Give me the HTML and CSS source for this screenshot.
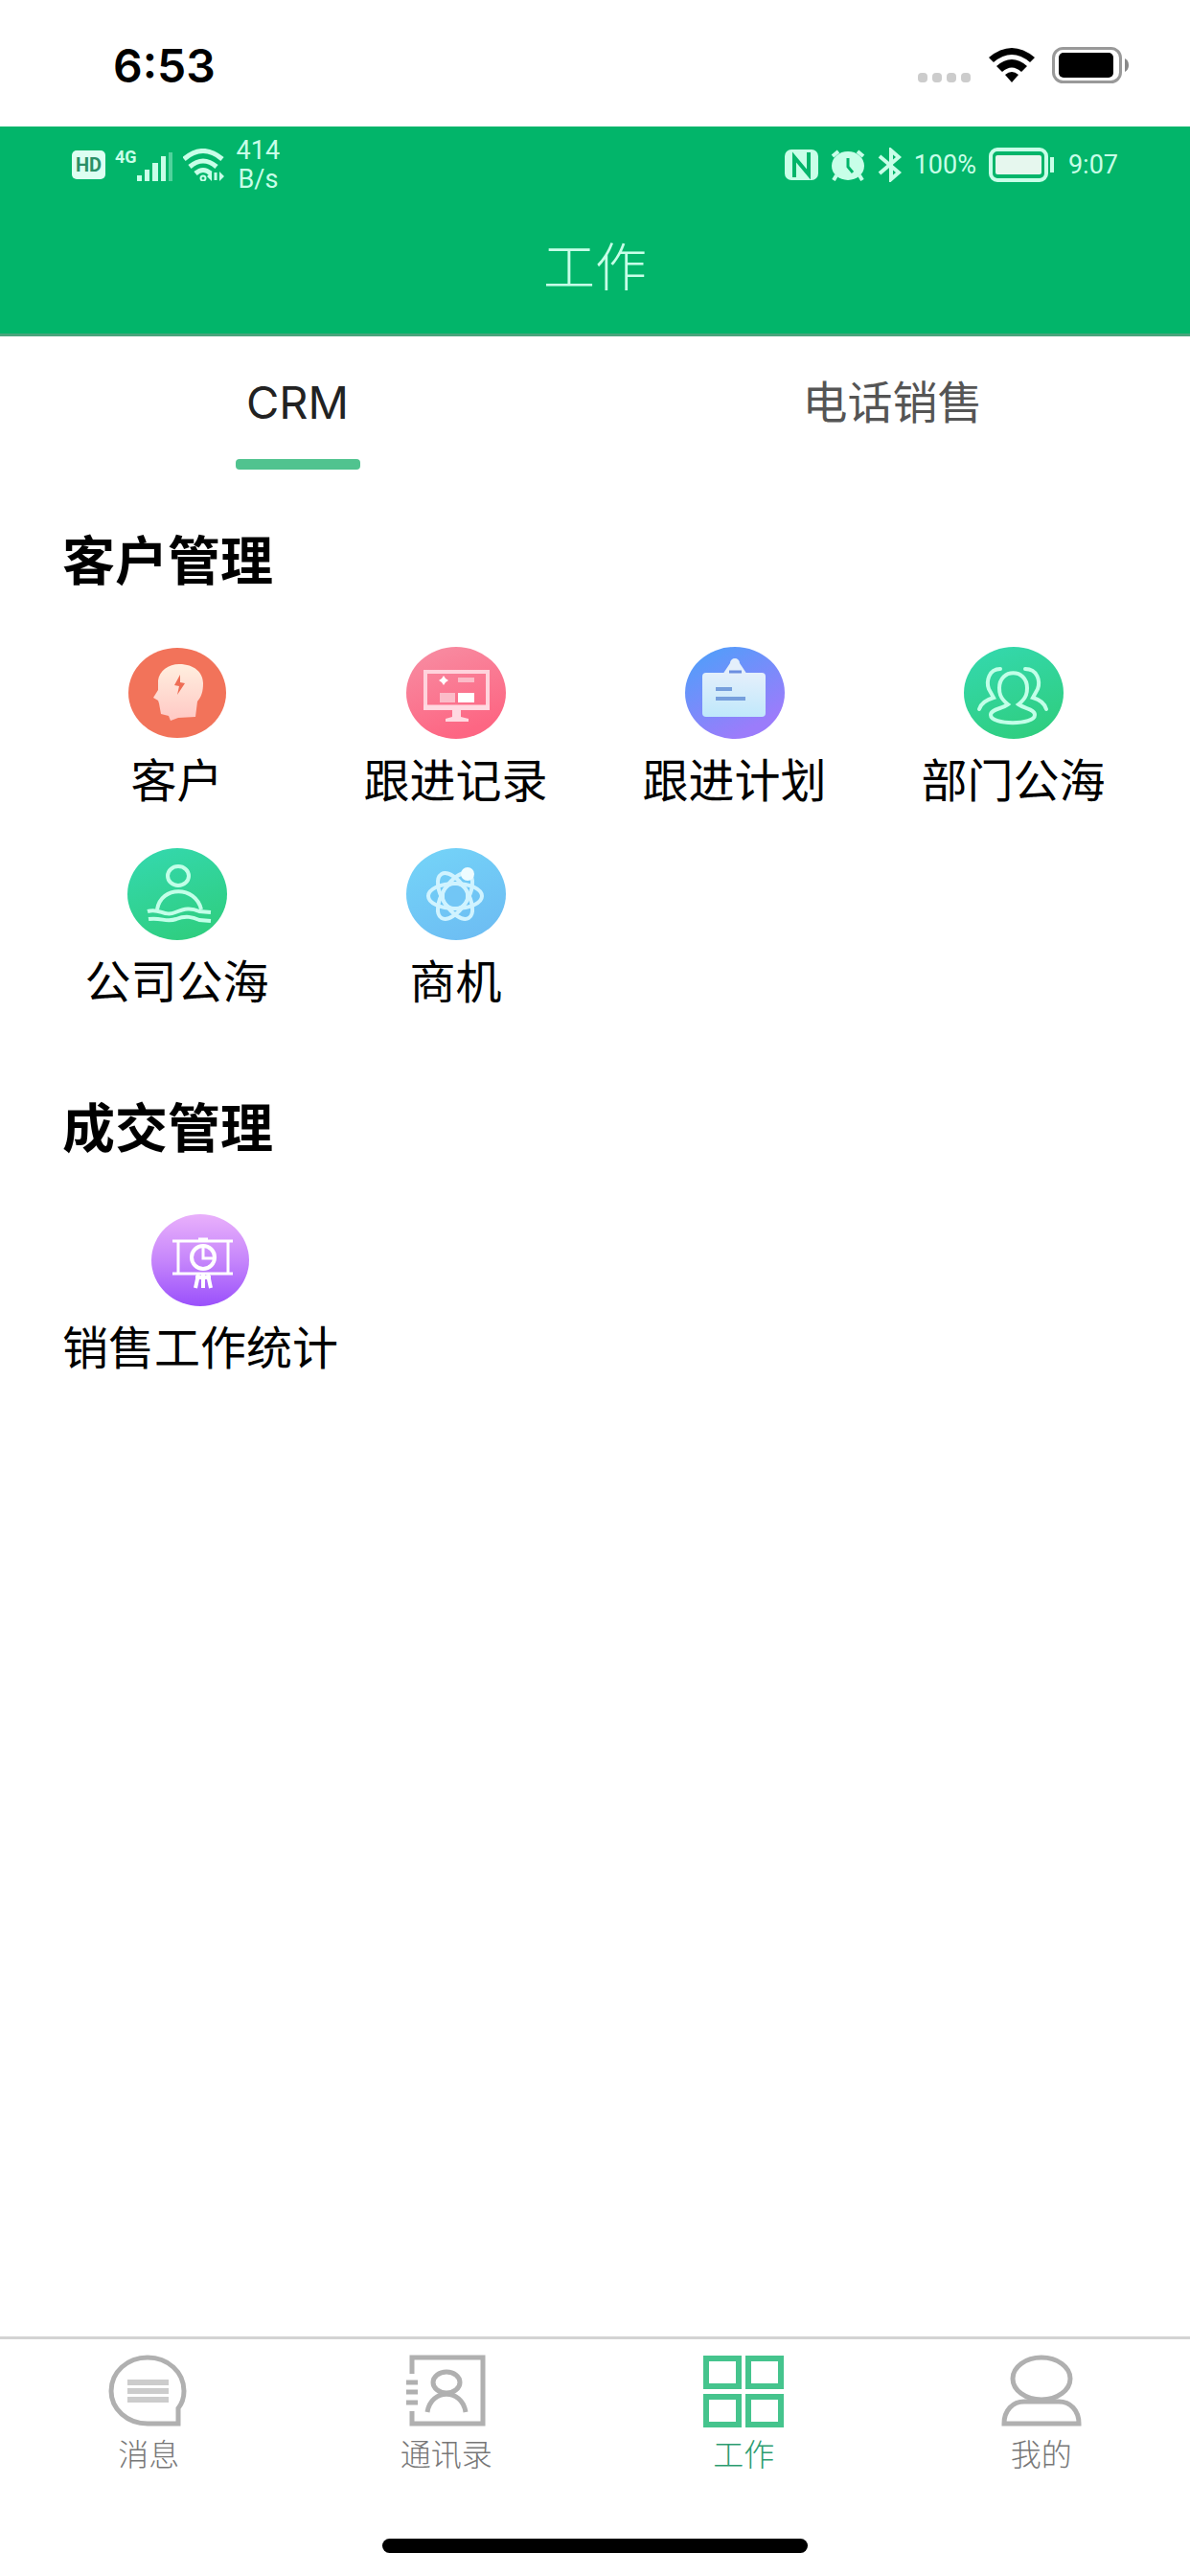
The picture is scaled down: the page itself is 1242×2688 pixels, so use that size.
FILE: index.html
```
<!DOCTYPE html>
<html lang="zh-CN">
<head>
  <meta charset="UTF-8">
  <meta name="viewport" content="width=device-width, initial-scale=1.0">
  <title>工作</title>
  <link rel="stylesheet" href="styles.css">
</head>
<body>
  <div class="phone-bar">
    <span class="phone-time">6:53</span>
    <div class="phone-icons">
      <svg class="dots" width="56" height="36" viewBox="0 0 56 36" fill="#ccc">
        <rect x="0" y="26" width="10" height="10" rx="4"/>
        <rect x="15" y="26" width="10" height="10" rx="4"/>
        <rect x="30" y="26" width="10" height="10" rx="4"/>
        <rect x="45" y="26" width="10" height="10" rx="4"/>
      </svg>
      <svg class="wifi" width="48" height="36" viewBox="0 0 48 36">
        <path d="M0 10 Q24 -10 48 10 L43 15 Q24 -1 5 15 Z"/>
        <path d="M8 19 Q24 5 40 19 L34 25 Q24 16 14 25 Z"/>
        <path d="M17 28 Q24 22 31 28 L24 36 Z"/>
      </svg>
      <svg width="80" height="38" viewBox="0 0 80 38">
        <rect x="1.5" y="1.5" width="70" height="35" rx="10" fill="none" stroke="#999" stroke-width="3"/>
        <rect x="7" y="6" width="57" height="26" rx="5"/>
        <path d="M76 12 Q80 14 80 19 T76 26 Z" fill="#888"/>
      </svg>
    </div>
  </div>

  <header class="header">
    <div class="status">
      <div class="status-left">
        <span class="hd">HD</span>
        <div class="signal">
          <span class="net">4G</span>
          <svg width="38" height="30" viewBox="0 0 38 30" fill="currentColor">
            <rect x="0" y="24" width="5" height="6"/>
            <rect x="8" y="18" width="5" height="12"/>
            <rect x="16" y="11" width="6" height="19"/>
            <rect x="25" y="4" width="5" height="26"/>
            <rect x="33" y="0" width="4" height="30" opacity=".4"/>
          </svg>
        </div>
        <svg class="wifi-small" width="44" height="34" viewBox="0 0 44 34" fill="none" stroke="currentColor" stroke-width="5">
          <path d="M1 11 Q21 -6 41 11"/>
          <path d="M7 19 Q21 7 35 19"/>
          <path d="M13 26 Q21 19 29 26"/>
          <circle cx="21" cy="31" r="1"/>
          <path d="M30 24v10l-5-5zM38 24v10l5-5z" fill="currentColor" stroke="none"/>
          <path d="M34 25v8" stroke-width="3"/>
        </svg>
        <div class="speed"><span>414</span><span>B/s</span></div>
      </div>
      <div class="status-right">
        <svg width="35" height="32" viewBox="0 0 35 32">
          <rect width="35" height="32" rx="7" fill="currentColor"/>
          <path d="M10 29 V8 L25 26 V3" fill="none" stroke="#02b56a" stroke-width="4"/>
        </svg>
        <svg width="36" height="33" viewBox="0 0 36 33">
          <ellipse cx="18" cy="17" rx="17" ry="15" fill="currentColor"/>
          <path d="M2 7 L8 2 M34 7 L28 2 M6 27 L3 32 M30 27 L33 32" stroke="currentColor" stroke-width="4"/>
          <path d="M18 9 V18 L23 24" fill="none" stroke="#02b56a" stroke-width="3"/>
        </svg>
        <svg width="25" height="36" viewBox="0 0 25 36" fill="none" stroke="currentColor" stroke-width="4">
          <path d="M2 9 L22 26 L14 33 V3 L22 10 L2 27"/>
        </svg>
        <span class="percent">100%</span>
        <svg width="68" height="36" viewBox="0 0 68 36">
          <rect x="2" y="2" width="58" height="32" rx="7" fill="none" stroke="currentColor" stroke-width="4"/>
          <rect x="7" y="8" width="48" height="20" rx="2" fill="#e6f7ee"/>
          <rect x="64" y="10" width="4" height="16" fill="currentColor"/>
        </svg>
        <span class="clock">9:07</span>
      </div>
    </div>
    <h1>工作</h1>
  </header>

  <main>
    <div class="tabs">
      <button class="tab active" type="button">CRM</button>
      <button class="tab" type="button">电话销售</button>
    </div>

    <section class="group">
      <h2>客户管理</h2>
      <div class="grid">
        <a class="item" href="#">
          <svg class="icon" viewBox="0 0 104 96">
            <defs>
              <linearGradient id="head" x1="0" y1="0" x2="0" y2="1"><stop offset="0" stop-color="#ffefdf"/><stop offset="1" stop-color="#ffc8c4"/></linearGradient>
            </defs>
            <ellipse cx="52" cy="48" rx="51" ry="47" fill="#f2735a"/>
            <path d="M54 18 C70 18 79 27 79 38 C79 47 77 52 73 57 L71 73 L53 74 L45 77 L43 72 L35 70 L33 59 L32 56 L27 53 L32 45 L32 35 C33 25 43 18 54 18 Z" fill="url(#head)"/>
            <path d="M55 29 L49 40 L54 41 L52 50 L60 38 L55 37 Z" fill="#ee6d55"/>
          </svg>
          <span>客户</span>
        </a>
        <a class="item" href="#">
          <svg class="icon" viewBox="0 0 104 96">
            <defs>
              <linearGradient id="pink" x1="0" y1="0" x2=".4" y2="1"><stop offset="0" stop-color="#f78fa4"/><stop offset="1" stop-color="#fd6683"/></linearGradient>
            </defs>
            <ellipse cx="52" cy="48" rx="52" ry="48" fill="url(#pink)"/>
            <rect x="20" y="26" width="65" height="38" fill="none" stroke="#ffd3dc" stroke-width="4"/>
            <path d="M18 63 H87" stroke="#ffd9e1" stroke-width="5"/>
            <path d="M48 65 H57 V73 L65 75 V78 H41 V75 L48 73 Z" fill="#ffd9e1"/>
            <path d="M39 30 L41 33 L44 35 L41 37 L39 40 L37 37 L34 35 L37 33 Z" fill="#fff"/>
            <rect x="54" y="32" width="17" height="5" fill="#fbbcc8"/>
            <rect x="35" y="48" width="16" height="10" fill="#fbbcc8"/>
            <rect x="54" y="48" width="17" height="10" fill="#fff"/>
          </svg>
          <span>跟进记录</span>
        </a>
        <a class="item" href="#">
          <svg class="icon" viewBox="0 0 104 96">
            <defs>
              <linearGradient id="blue" x1=".1" y1="0" x2=".7" y2="1"><stop offset=".1" stop-color="#559cfa"/><stop offset=".9" stop-color="#9b7cfb"/></linearGradient>
              <linearGradient id="board" x1=".5" y1="0" x2=".4" y2="1"><stop offset="0" stop-color="#e4effb"/><stop offset="1" stop-color="#bfe8fb"/></linearGradient>
            </defs>
            <ellipse cx="52" cy="48" rx="52" ry="48" fill="url(#blue)"/>
            <path d="M39 29 L47 17 A5 5 0 0 1 57 17 L65 29 Z" fill="#e4effb"/>
            <rect x="18" y="27" width="66" height="46" rx="4" fill="url(#board)"/>
            <path d="M46 26 H59" stroke="#6d8fe0" stroke-width="3"/>
            <path d="M32 44 H49 M32 54 H63" stroke="#769fdc" stroke-width="4"/>
          </svg>
          <span>跟进计划</span>
        </a>
        <a class="item" href="#">
          <svg class="icon" viewBox="0 0 104 96">
            <defs>
              <linearGradient id="green" x1=".2" y1="0" x2=".6" y2="1"><stop offset="0" stop-color="#34d8ad"/><stop offset="1" stop-color="#2fce80"/></linearGradient>
            </defs>
            <ellipse cx="52" cy="48" rx="52" ry="48" fill="url(#green)"/>
            <g fill="none" stroke="#c2ffe8" stroke-width="4" stroke-linecap="round">
              <path d="M46 60 C37 53 37 47 37 43 C37 22 66 22 66 43 C66 47 66 53 57 60 C64 65 74 65 74 71 C74 82 28 82 28 71 C28 65 39 65 46 60 Z"/>
              <path d="M38 23 C26 23 23 36 26 44 L31 53 C24 55 18 58 16 65"/>
              <path d="M64 23 C77 23 80 36 77 44 L72 53 C79 55 84 58 86 65"/>
            </g>
          </svg>
          <span>部门公海</span>
        </a>
        <a class="item" href="#">
          <svg class="icon" viewBox="0 0 104 96">
            <ellipse cx="52" cy="48" rx="52" ry="48" fill="url(#green)"/>
            <g fill="none" stroke="#c2ffe8" stroke-width="4">
              <ellipse cx="53" cy="29" rx="11" ry="10"/>
              <path d="M31 64 C35 39 71 39 77 64"/>
              <path d="M21 66 C34 62 38 72 50 67 C60 63 66 62 75 66 L87 67"/>
              <path d="M22 74 C36 72 40 78 51 74 C61 70 68 72 75 75 L87 76"/>
            </g>
          </svg>
          <span>公司公海</span>
        </a>
        <a class="item" href="#">
          <svg class="icon" viewBox="0 0 104 96">
            <defs>
              <linearGradient id="sky" x1=".2" y1="0" x2=".7" y2="1"><stop offset="0" stop-color="#74d3f8"/><stop offset="1" stop-color="#6dbdf3"/></linearGradient>
            </defs>
            <ellipse cx="52" cy="48" rx="52" ry="48" fill="url(#sky)"/>
            <g fill="none" stroke="#d0f3ff" stroke-width="4">
              <ellipse cx="51" cy="50" rx="28" ry="13"/>
              <ellipse cx="51" cy="50" rx="27" ry="13" transform="rotate(58 51 50)"/>
              <ellipse cx="51" cy="50" rx="27" ry="13" transform="rotate(122 51 50)"/>
              <circle cx="51" cy="50" r="13"/>
            </g>
            <circle cx="51" cy="50" r="11" fill="#72c6f5"/>
            <circle cx="64" cy="27" r="7" fill="#eefcff"/>
          </svg>
          <span>商机</span>
        </a>
      </div>
    </section>

    <section class="group">
      <h2>成交管理</h2>
      <div class="row">
        <a class="item" href="#">
          <svg class="icon" viewBox="0 0 104 96">
            <defs>
              <linearGradient id="purple" x1="0" y1="0" x2="0" y2="1"><stop offset="0" stop-color="#e9b0fb"/><stop offset=".5" stop-color="#c686fb"/><stop offset="1" stop-color="#9a50fb"/></linearGradient>
            </defs>
            <ellipse cx="52" cy="48" rx="51" ry="48" fill="url(#purple)"/>
            <g fill="none" stroke="#fff" stroke-width="3">
              <path d="M23 28 H86 M23 62 H86 M29 28 V62 M81 28 V62 M50 26 H60"/>
              <circle cx="55" cy="45" r="12" stroke-width="4"/>
              <path d="M55 32 V46 H68"/>
              <path d="M50 63 L47 77 M55 63 V77 M60 63 L63 77 M47 66 H63" stroke-width="4"/>
            </g>
          </svg>
          <span>销售工作统计</span>
        </a>
      </div>
    </section>
  </main>

  <nav class="nav">
    <a href="#">
      <svg width="84" height="76" viewBox="0 0 84 76" fill="none" stroke="#b0b0b0" stroke-width="5">
        <path d="M73 72 H41 C20 72 3 57 3 38 C3 18 20 3 41 3 C62 3 79 18 79 38 C79 46 77 51 73 56 Z"/>
        <path d="M20 29 H63 M20 38 H63 M20 47 H63" stroke="#ccc" stroke-width="6"/>
      </svg>
      <span>消息</span>
    </a>
    <a href="#">
      <svg width="84" height="76" viewBox="0 0 84 76" fill="none" stroke="#b0b0b0" stroke-width="5">
        <path d="M6 20 V3 H80 V72 H6 V59"/>
        <path d="M0 29 H12 M0 39 H12 M0 50 H12"/>
        <ellipse cx="42" cy="29" rx="14" ry="11"/>
        <path d="M22 60 C26 35 58 35 62 60"/>
      </svg>
      <span>通讯录</span>
    </a>
    <a class="current" href="#">
      <svg width="84" height="76" viewBox="0 0 84 76" fill="none" stroke="#45c48d" stroke-width="6">
        <rect x="3" y="4" width="34" height="29"/>
        <rect x="47" y="4" width="34" height="29"/>
        <rect x="3" y="44" width="34" height="29"/>
        <rect x="47" y="44" width="34" height="29"/>
      </svg>
      <span>工作</span>
    </a>
    <a href="#">
      <svg width="84" height="76" viewBox="0 0 84 76" fill="none" stroke="#b0b0b0" stroke-width="5">
        <ellipse cx="42" cy="25" rx="30" ry="22"/>
        <path d="M3 72 C3 58 12 49 24 49 H60 C72 49 81 58 81 72 Z"/>
      </svg>
      <span>我的</span>
    </a>
  </nav>
  <div class="home-bar"></div>
</body>
</html>
```
FILE: styles.css
```
* {
  box-sizing: border-box;
}

body {
  margin: 0;
  min-height: 100vh;
  display: flex;
  flex-direction: column;
  background: #fff;
  color: #000;
  font-family: Inter, "Noto Sans CJK SC", sans-serif;
}

a {
  color: inherit;
  text-decoration: none;
}

svg {
  display: block;
}

.phone-bar {
  height: 132px;
  padding: 4px 64px 0 118px;
  display: flex;
  align-items: center;
  justify-content: space-between;
}

.phone-time {
  font-size: 48px;
  font-weight: 600;
}

.phone-icons {
  display: flex;
  align-items: center;
}

.wifi {
  margin-right: 18px;
}

.dots {
  margin-right: 18px;
}

.header {
  height: 219px;
  background: #02b56a;
  border-bottom: 3px solid #4aa57c;
  color: #c8ffe8;
}

.status {
  height: 80px;
  padding: 0 75px;
  display: flex;
  justify-content: space-between;
  align-items: center;
  font-family: Roboto, sans-serif;
  font-size: 27px;
}

.status-left,
.status-right {
  display: flex;
  align-items: center;
}

.status-right {
  gap: 13px;
}

.hd {
  width: 35px;
  height: 30px;
  border-radius: 5px;
  background: #dcfff2;
  color: #2a8f66;
  font-size: 20px;
  font-weight: bold;
  line-height: 30px;
  text-align: center;
}

.signal {
  display: flex;
  align-items: flex-end;
  margin: 0 10px;
}

.net {
  height: 34px;
  font-size: 18px;
  font-weight: bold;
  line-height: 18px;
}

.speed {
  display: flex;
  flex-direction: column;
  align-items: center;
  margin-left: 12px;
  line-height: 30px;
}

.clock {
  margin-left: 2px;
}

h1 {
  margin: 30px 0 0;
  font-size: 54px;
  font-weight: 300;
  line-height: 76px;
  text-align: center;
}

main {
  flex: 1;
}

.tabs {
  display: flex;
  padding-top: 39px;
}

.tab {
  flex: 1;
  display: flex;
  flex-direction: column;
  align-items: center;
  gap: 29px;
  padding: 0;
  border: none;
  background: none;
  color: #555;
  font-family: inherit;
  font-size: 47px;
  line-height: 60px;
}

.tab::after {
  content: "";
  width: 130px;
  height: 11px;
  border-radius: 4px;
}

.tab.active {
  color: #222;
}

.tab.active::after {
  background: #50c38f;
}

.group {
  margin-top: 60px;
}

.group + .group {
  margin-top: 87px;
}

h2 {
  margin: 0 0 55px 65px;
  font-size: 55px;
  font-weight: bold;
  line-height: 70px;
}

.grid {
  display: grid;
  grid-template-columns: repeat(4, 1fr);
  row-gap: 40px;
  padding: 0 39px;
}

.row {
  display: flex;
  padding: 0 65px;
}

.item {
  display: flex;
  flex-direction: column;
  align-items: center;
  gap: 14px;
  font-size: 48px;
  line-height: 60px;
}

.icon {
  width: 104px;
  height: 96px;
}

.nav {
  display: flex;
  border-top: 3px solid #d3d3d3;
  padding-top: 16px;
}

.nav a {
  flex: 1;
  display: flex;
  flex-direction: column;
  align-items: center;
  gap: 9px;
  color: #777;
  font-size: 32px;
  font-weight: 300;
  line-height: 40px;
}

.nav .current {
  color: #2c9c70;
}

.home-bar {
  width: 444px;
  height: 15px;
  margin: 67px auto 24px;
  border-radius: 8px;
  background: #000;
}
```
